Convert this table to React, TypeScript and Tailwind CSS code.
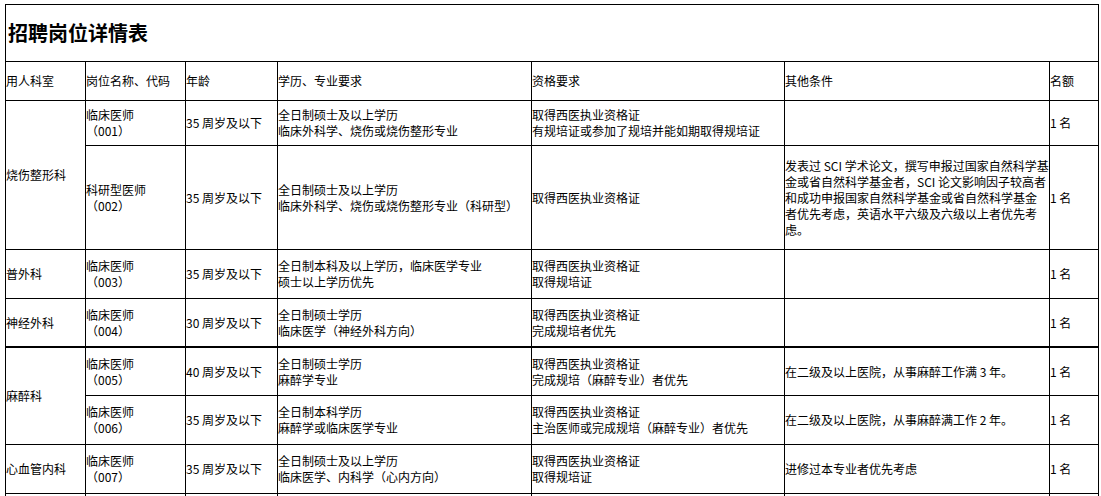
import { Fragment } from "react";
import { clsx } from "clsx";

type Row = {
  dept?: string;
  deptSpan?: number;
  post: string[];
  age: string;
  edu: string[];
  qual: string[];
  other: string[];
  count: string;
  thick?: boolean;
};

const rows: Row[] = [
  {
    dept: "烧伤整形科",
    deptSpan: 2,
    post: ["临床医师", "（001）"],
    age: "35 周岁及以下",
    edu: ["全日制硕士及以上学历", "临床外科学、烧伤或烧伤整形专业"],
    qual: ["取得西医执业资格证", "有规培证或参加了规培并能如期取得规培证"],
    other: [],
    count: "1 名",
  },
  {
    post: ["科研型医师", "（002）"],
    age: "35 周岁及以下",
    edu: ["全日制硕士及以上学历", "临床外科学、烧伤或烧伤整形专业（科研型）"],
    qual: ["取得西医执业资格证"],
    other: [
      "发表过 SCI 学术论文，撰写申报过国家自然科学基",
      "金或省自然科学基金者，SCI 论文影响因子较高者",
      "和成功申报国家自然科学基金或省自然科学基金",
      "者优先考虑，英语水平六级及六级以上者优先考",
      "虑。",
    ],
    count: "1 名",
  },
  {
    dept: "普外科",
    post: ["临床医师", "（003）"],
    age: "35 周岁及以下",
    edu: ["全日制本科及以上学历，临床医学专业", "硕士以上学历优先"],
    qual: ["取得西医执业资格证", "取得规培证"],
    other: [],
    count: "1 名",
  },
  {
    dept: "神经外科",
    post: ["临床医师", "（004）"],
    age: "30 周岁及以下",
    edu: ["全日制硕士学历", "临床医学（神经外科方向）"],
    qual: ["取得西医执业资格证", "完成规培者优先"],
    other: [],
    count: "1 名",
    thick: true,
  },
  {
    dept: "麻醉科",
    deptSpan: 2,
    post: ["临床医师", "（005）"],
    age: "40 周岁及以下",
    edu: ["全日制硕士学历", "麻醉学专业"],
    qual: ["取得西医执业资格证", "完成规培（麻醉专业）者优先"],
    other: ["在二级及以上医院，从事麻醉工作满 3 年。"],
    count: "1 名",
  },
  {
    post: ["临床医师", "（006）"],
    age: "35 周岁及以下",
    edu: ["全日制本科学历", "麻醉学或临床医学专业"],
    qual: ["取得西医执业资格证", "主治医师或完成规培（麻醉专业）者优先"],
    other: ["在二级及以上医院，从事麻醉满工作 2 年。"],
    count: "1 名",
  },
  {
    dept: "心血管内科",
    post: ["临床医师", "（007）"],
    age: "35 周岁及以下",
    edu: ["全日制硕士及以上学历", "临床医学、内科学（心内方向）"],
    qual: ["取得西医执业资格证", "取得规培证"],
    other: ["进修过本专业者优先考虑"],
    count: "1 名",
  },
  {
    dept: "",
    post: [],
    age: "",
    edu: [],
    qual: [],
    other: [],
    count: "",
  },
];

const headers = [
  "用人科室",
  "岗位名称、代码",
  "年龄",
  "学历、专业要求",
  "资格要求",
  "其他条件",
  "名额",
];

function Cell({
  lines,
  thick,
  span,
}: {
  lines: string[];
  thick?: boolean;
  span?: number;
}) {
  return (
    <div
      className={clsx(
        "flex flex-col justify-center overflow-hidden whitespace-nowrap border-r border-black",
        thick ? "border-b-2" : "border-b",
        span === 2 && "row-span-2",
      )}
    >
      {lines.map((line, i) => (
        <span key={i}>{line}</span>
      ))}
    </div>
  );
}

export default function App() {
  return (
    <div className="h-[496px] w-[1101px] overflow-hidden bg-white pl-[5px] pt-[4px] font-['Noto_Sans_CJK_SC',sans-serif] text-[12px] leading-[16px] text-black">
      <div className="grid w-[1094px] grid-cols-[80px_100px_92px_254px_253px_265px_49px] grid-rows-[57px_39px_45px_104px_49px_49px_48px_49px_49px_49px] border-l border-t border-black">
        <div className="col-span-7 flex items-center border-b border-r border-black pl-[2px] text-[20px] font-bold leading-[24px]">
          招聘岗位详情表
        </div>

        {headers.map((h) => (
          <Cell key={h} lines={[h]} />
        ))}

        {rows.map((row, i) => (
          <Fragment key={i}>
            {row.dept !== undefined ? (
              <Cell
                lines={row.dept ? [row.dept] : []}
                span={row.deptSpan}
                thick={row.thick}
              />
            ) : null}
            <Cell lines={row.post} thick={row.thick} />
            <Cell lines={[row.age]} thick={row.thick} />
            <Cell lines={row.edu} thick={row.thick} />
            <Cell lines={row.qual} thick={row.thick} />
            <Cell lines={row.other} thick={row.thick} />
            <Cell lines={[row.count]} thick={row.thick} />
          </Fragment>
        ))}
      </div>
    </div>
  );
}
